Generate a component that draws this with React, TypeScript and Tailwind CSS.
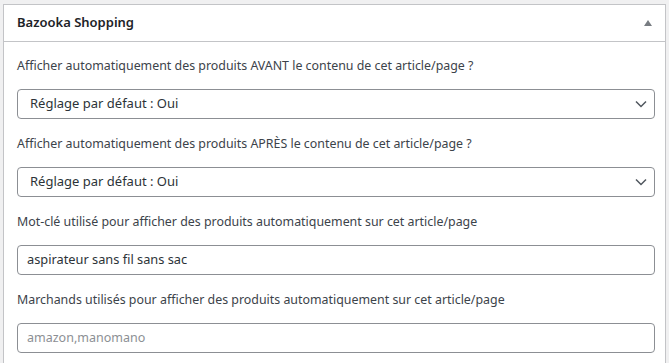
const Field = ({ label, children }: { label: string; children: React.ReactNode }) => (
  <div className="flex flex-col gap-[14px]">
    <div className="text-[12.4px] leading-[18px] text-[#3c434a]">{label}</div>
    {children}
  </div>
)

const Select = ({ value }: { value: string }) => (
  <div className="h-[30px] border border-[#8c8f94] rounded-[4px] flex items-center justify-between pl-[12px] pr-[7px]">
    <span className="text-[13px] text-[#2c3338]">{value}</span>
    <svg width="12" height="8" viewBox="0 0 12 8" fill="none">
      <path d="M1 1.5 L6 6.5 L11 1.5" stroke="#50575e" strokeWidth="1.5" />
    </svg>
  </div>
)

const Input = ({ value, placeholder }: { value?: string; placeholder?: string }) => (
  <div className="h-[30px] border border-[#8c8f94] rounded-[4px] flex items-center px-[9px]">
    {value ? (
      <span className="text-[12.8px] text-[#2c3338]">{value}</span>
    ) : (
      <span className="text-[12.5px] text-[#8c8f94]">{placeholder}</span>
    )}
  </div>
)

export default function App() {
  return (
    <div className="min-h-screen bg-[#f0f0f1] pt-[4px] pl-[3px] pr-[3px]" style={{ fontFamily: '"Noto Sans", sans-serif' }}>
      <div className="bg-white border border-[#c3c4c7] border-b-0 h-[359px]">
        <div className="h-[37px] border-b border-[#c3c4c7] flex items-center justify-between pl-[13px] pr-[13px]">
          <div className="text-[13px] font-semibold text-[#1d2327]">Bazooka Shopping</div>
          <svg width="8" height="6" viewBox="0 0 8 6">
            <path d="M4 0 L8 6 L0 6 Z" fill="#787c82" />
          </svg>
        </div>
        <div className="pl-[13px] pr-[10px] pt-[15px] flex flex-col gap-[16px]">
          <Field label="Afficher automatiquement des produits AVANT le contenu de cet article/page ?">
            <Select value="Réglage par défaut : Oui" />
          </Field>
          <Field label="Afficher automatiquement des produits APRÈS le contenu de cet article/page ?">
            <Select value="Réglage par défaut : Oui" />
          </Field>
          <Field label="Mot-clé utilisé pour afficher des produits automatiquement sur cet article/page">
            <Input value="aspirateur sans fil sans sac" />
          </Field>
          <Field label="Marchands utilisés pour afficher des produits automatiquement sur cet article/page">
            <Input placeholder="amazon,manomano" />
          </Field>
        </div>
      </div>
    </div>
  )
}
